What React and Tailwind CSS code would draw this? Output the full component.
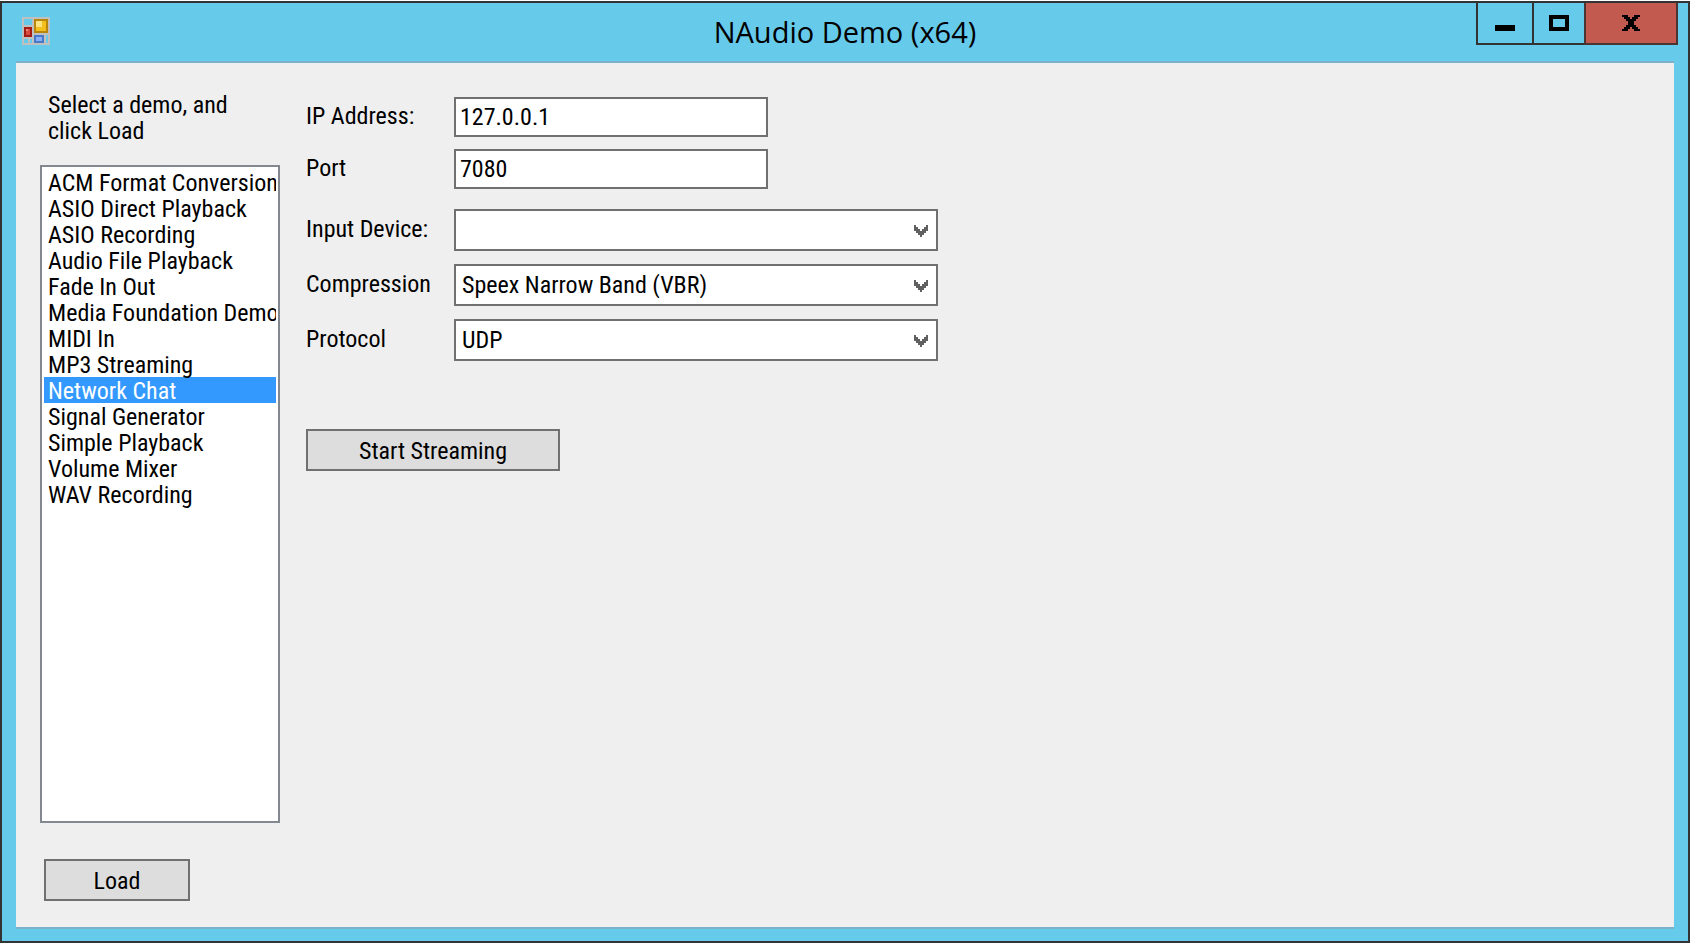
const demos = [
  "ACM Format Conversion",
  "ASIO Direct Playback",
  "ASIO Recording",
  "Audio File Playback",
  "Fade In Out",
  "Media Foundation Demo",
  "MIDI In",
  "MP3 Streaming",
  "Network Chat",
  "Signal Generator",
  "Simple Playback",
  "Volume Mixer",
  "WAV Recording",
];

const AppIcon = () => (
  <svg width="28" height="28" viewBox="0 0 14 14" shapeRendering="crispEdges" aria-hidden="true">
    <path
      fill="#c0c0c0"
      fillRule="evenodd"
      d="M0 0h14v14H0z M1 1v3h4V1z M1 11v2h2v-2z M4 11v2h1v-2z M12 9v4h1V9z"
    />
    <path fill="#a01c14" d="M1 5h4v5H1z" />
    <path fill="#d8483c" d="M2 6h2v3H2z" />
    <path fill="#f08878" d="M2 6h1v1H2z" />
    <path fill="#b8860b" d="M6 1h7v7H6z" />
    <path fill="#f4c020" d="M7 2h5v5H7z" />
    <path fill="#fce480" d="M7 2h3v3H7z" />
    <path fill="#4878c8" d="M6 9h5v4H6z" />
    <path fill="#88b0f8" d="M7 10h3v2H7z" />
  </svg>
);

const Select = ({ id, options }) => (
  <div className="relative">
    <select
      id={id}
      className="h-[42px] w-full appearance-none border-2 border-[#707070] bg-white px-1.5 outline-none"
    >
      {options.map((option) => (
        <option key={option}>{option}</option>
      ))}
    </select>
    <svg
      className="pointer-events-none absolute top-4 right-2.5"
      width="14"
      height="12"
      viewBox="0 0 7 6"
      shapeRendering="crispEdges"
      aria-hidden="true"
    >
      <path fill="#606060" d="M0 0h1v1h1v1h1v1h1V2h1V1h1V0h1v3H6v1H5v1H4v1H3V5H2V4H1V3H0z" />
    </svg>
  </div>
);

const App = () => {
  return (
    <div className="flex min-h-screen flex-col bg-white py-px font-['Roboto_Condensed','Roboto',sans-serif] text-[24px] leading-[26px] text-black">
      <div className="flex flex-1 flex-col border-2 border-[#333333] bg-[#66caea]">
        <header className="grid h-[58px] grid-cols-[1fr_auto_1fr] items-start">
          <div className="pt-3.5 pl-5">
            <AppIcon />
          </div>
          <h1 className="pt-[9px] font-['Open_Sans',sans-serif] text-[29px] leading-[40px]">
            NAudio Demo (x64)
          </h1>
          <div className="mr-2.5 flex h-[42px] justify-self-end">
            <button
              type="button"
              aria-label="Minimize"
              className="flex w-[58px] items-center justify-center border-x-2 border-b-2 border-[#333333]"
            >
              <svg width="20" height="16" viewBox="0 0 10 8" shapeRendering="crispEdges" aria-hidden="true">
                <path d="M0 5h10v3H0z" />
              </svg>
            </button>
            <button
              type="button"
              aria-label="Maximize"
              className="flex w-[50px] items-center justify-center border-b-2 border-[#333333]"
            >
              <svg width="20" height="16" viewBox="0 0 10 8" shapeRendering="crispEdges" aria-hidden="true">
                <path fillRule="evenodd" d="M0 0h10v8H0z M2 2v4h6V2z" />
              </svg>
            </button>
            <button
              type="button"
              aria-label="Close"
              className="flex w-[94px] items-center justify-center border-x-2 border-b-2 border-[#4b3433] bg-[#c35a50]"
            >
              <svg width="18" height="16" viewBox="0 0 9 8" shapeRendering="crispEdges" aria-hidden="true">
                <path d="M0 0h3v1h1v1h1V1h1V0h3v1H8v1H7v1H6v2h1v1h1v1h1v1H6V7H5V6H4v1H3v1H0V7h1V6h1V5h1V3H2V2H1V1H0z" />
              </svg>
            </button>
          </div>
        </header>

        <main className="mx-3.5 mb-3 flex flex-1 gap-[26px] border-y-2 border-[#7bb1cb] bg-[#efefef] pl-6">
          <div className="flex w-[240px] flex-col pt-[29px] pb-[26px]">
            <label htmlFor="demo" className="pr-8 pl-2">
              Select a demo, and click Load
            </label>
            <select
              id="demo"
              size={13}
              defaultValue="Network Chat"
              className="mt-[21px] flex-1 overflow-hidden border-2 border-[#828790] bg-white p-0.5 outline-none"
            >
              {demos.map((demo) => (
                <option
                  key={demo}
                  className="h-[26px] min-h-[26px] overflow-x-clip overflow-y-visible p-0 pl-1 checked:bg-[#3399ff] checked:bg-linear-to-r checked:from-[#3399ff] checked:to-[#3399ff] checked:text-white"
                >
                  {demo}
                </option>
              ))}
            </select>
            <button
              type="button"
              className="mt-9 ml-1 h-[42px] w-[146px] border-2 border-[#707070] bg-[#dddddd] pt-0.5"
            >
              Load
            </button>
          </div>

          <form className="flex flex-col pt-[34px]">
            <div className="grid grid-cols-[148px_314px] items-center gap-y-3">
              <label htmlFor="ip" className="pb-0.5">
                IP Address:
              </label>
              <input
                id="ip"
                defaultValue="127.0.0.1"
                className="h-10 border-2 border-[#707070] bg-white px-1 outline-none"
              />
              <label htmlFor="port" className="pb-0.5">
                Port
              </label>
              <input
                id="port"
                defaultValue="7080"
                className="h-10 border-2 border-[#707070] bg-white px-1 outline-none"
              />
            </div>
            <div className="mt-5 grid grid-cols-[148px_484px] items-center gap-y-[13px]">
              <label htmlFor="device" className="pb-0.5">
                Input Device:
              </label>
              <Select id="device" options={[""]} />
              <label htmlFor="compression" className="pb-0.5">
                Compression
              </label>
              <Select id="compression" options={["Speex Narrow Band (VBR)"]} />
              <label htmlFor="protocol" className="pb-0.5">
                Protocol
              </label>
              <Select id="protocol" options={["UDP"]} />
            </div>
            <button
              type="button"
              className="mt-[68px] h-[42px] w-[254px] border-2 border-[#707070] bg-[#dddddd] pt-0.5"
            >
              Start Streaming
            </button>
          </form>
        </main>
      </div>
    </div>
  );
};

export default App;
